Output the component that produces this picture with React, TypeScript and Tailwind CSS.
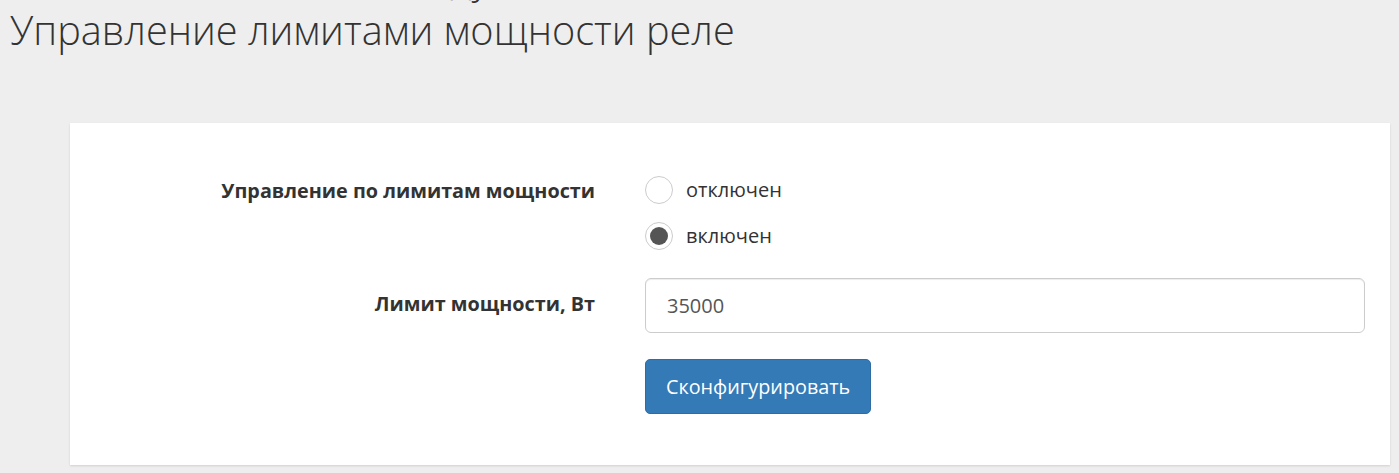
import React from "react";

export default function App() {
  return (
    <div
      className="min-h-[473px] w-full bg-[#eeeeee] text-[#333333] overflow-hidden"
      style={{ fontFamily: '"Open Sans", "Noto Sans", sans-serif' }}
    >
      <div className="relative h-[0px]">
        <div className="absolute left-[450px] top-[-42px] text-[40px] font-light leading-none text-[#333]">
          ду
        </div>
      </div>
      <h1 className="pl-[10px] pt-[4px] text-[39.7px] font-light leading-[52px] text-[#333]">
        Управление лимитами мощности реле
      </h1>
      <div className="ml-[70px] mr-[9px] mt-[67px] bg-white shadow-[0_1px_2px_rgba(0,0,0,0.12)] pt-[53px] pb-[51px] pr-[25px]">
        <div className="flex">
          <div className="w-[525px] shrink-0 text-right text-[19.8px] font-bold leading-[30px]">
            Управление по лимитам мощности
          </div>
          <div className="ml-[50px] flex flex-col gap-[18px]">
            <label className="flex items-center gap-[13px] text-[20px] leading-[28px]">
              <span className="w-[28px] h-[28px] rounded-full border border-[#cccccc] bg-white" />
              <span>отключен</span>
            </label>
            <label className="flex items-center gap-[13px] text-[20px] leading-[28px]">
              <span className="w-[28px] h-[28px] rounded-full border border-[#cccccc] bg-white flex items-center justify-center">
                <span className="w-[18px] h-[18px] rounded-full bg-[#555555]" />
              </span>
              <span>включен</span>
            </label>
          </div>
        </div>
        <div className="flex mt-[28px]">
          <div className="w-[525px] shrink-0 text-right text-[19.8px] font-bold pt-[11px] leading-[30px]">
            Лимит мощности, Вт
          </div>
          <div className="ml-[50px] flex-1 flex flex-col">
            <div className="h-[55px] w-full rounded-[6px] border border-[#cccccc] bg-white shadow-[inset_0_1px_1px_rgba(0,0,0,0.075)] flex items-center px-[21px] text-[20px] text-[#555555]">
              35000
            </div>
            <div className="mt-[26px]">
              <button className="h-[55px] px-[20px] rounded-[5px] bg-[#337ab7] border border-[#2e6da4] text-white text-[19.8px]">
                Сконфигурировать
              </button>
            </div>
          </div>
        </div>
      </div>
    </div>
  );
}
